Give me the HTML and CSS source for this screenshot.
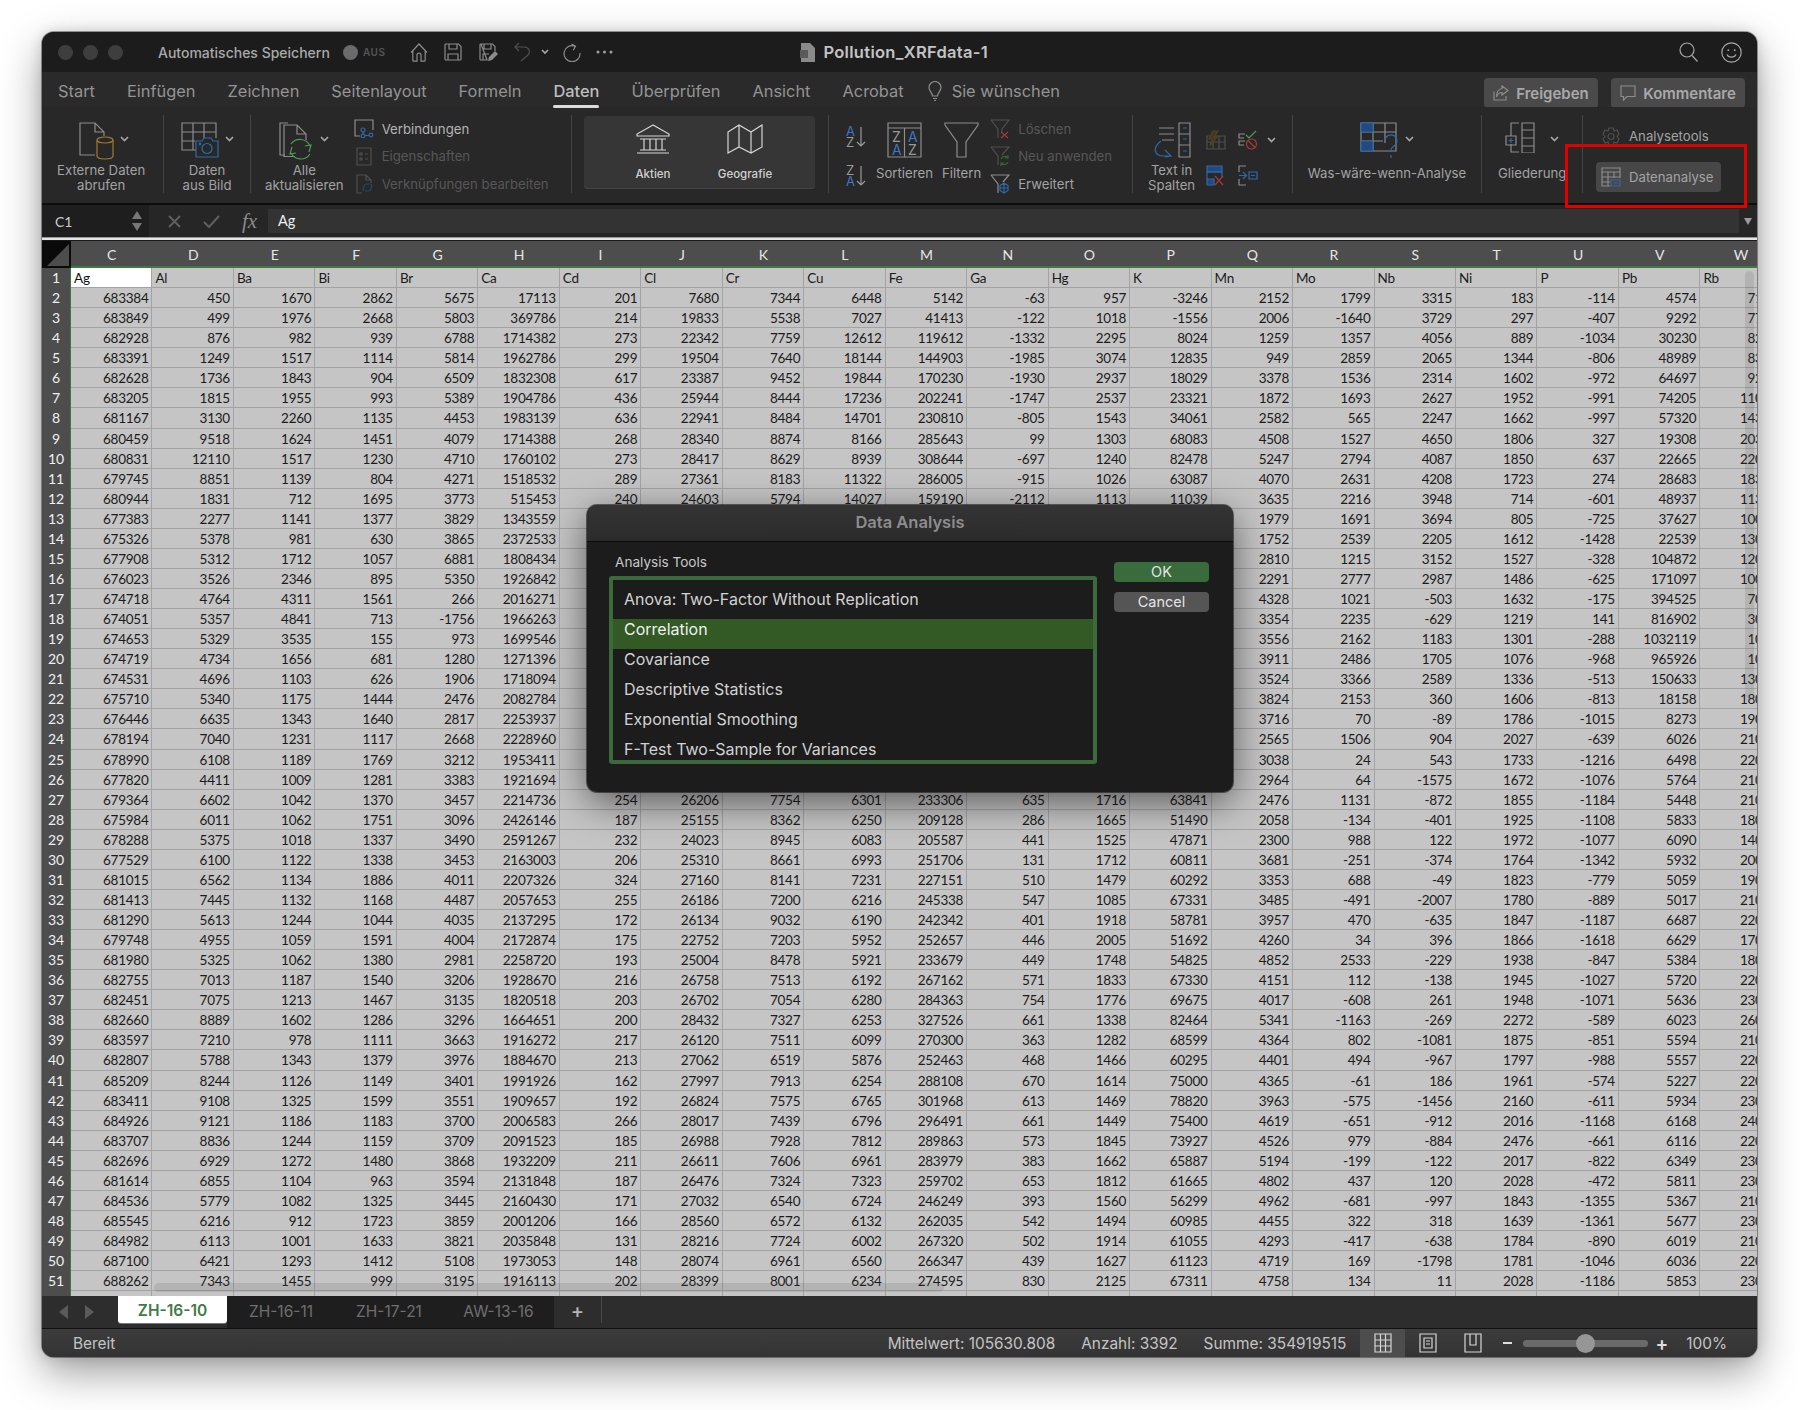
FILE: index.html
```html
<!DOCTYPE html>
<html>
	<head>
		<meta charset="utf-8">
		<title>Pollution_XRFdata-1</title>
		<link rel="stylesheet" href="styles.css">
	</head>
	<body>
		<div class="window">

			<!-- title bar -->
			<div class="titlebar">
				<div class="lights"><i></i><i></i><i></i></div>
				<span class="autosave">Automatisches Speichern</span>
				<i class="toggle"></i><span class="toggle-label">AUS</span>
				<svg class="ic qa-home" width="18" height="19" viewBox="0 0 18 19"><path d="M1 9.5L9 1l8 8.5M2.8 8v9.2a1 1 0 0 0 1 1H7v-6a2 2 0 0 1 4 0v6h3.2a1 1 0 0 0 1-1V8"/></svg>
				<svg class="ic qa-save" width="18" height="18" viewBox="0 0 18 18"><path d="M2 1h12.5L17 3.5V16a1 1 0 0 1-1 1H2a1 1 0 0 1-1-1V2a1 1 0 0 1 1-1zM5 1v5h8V1M4 17v-6h10v6"/></svg>
				<svg class="ic qa-saveas" width="19" height="19" viewBox="0 0 19 19"><path d="M2 1h11.5L16 3.5V8M8 17H2a1 1 0 0 1-1-1V2a1 1 0 0 1 1-1zM5 1v5h7V1M4 17v-6h6"/><path class="solid" d="M9 18l1-4 6-6 3 3-6 6z"/></svg>
				<svg class="ic qa-undo dim" width="17" height="20" viewBox="0 0 17 20"><path d="M5 1L1 5l4 4M1 5h9c5 0 7 5 4 8l-7 6"/></svg>
				<svg class="chev qa-chev" width="8" height="6" viewBox="0 0 8 6"><path d="M1 1l3 3 3-3"/></svg>
				<svg class="ic qa-redo" width="20" height="19" viewBox="0 0 20 19"><path d="M13 3.200A8 8 0 1 0 18 10M9.500 1l4 2.200-2.200 4"/></svg>
				<svg class="qa-dots" width="17" height="4" viewBox="0 0 17 4"><circle cx="2" cy="2" r="1.500"/><circle cx="8.500" cy="2" r="1.500"/><circle cx="15" cy="2" r="1.500"/></svg>
				<div class="doc-title">
					<svg width="16" height="19" viewBox="0 0 16 19"><path class="doc-fill" d="M1 0h9l5 5v14H1z"/><rect class="doc-x" x="0" y="7" width="8" height="8"/></svg>
					<span>Pollution_XRFdata-1</span>
				</div>
				<svg class="ic tb-search" width="19" height="20" viewBox="0 0 19 20"><circle cx="8" cy="8" r="7"/><path d="M13 13.500l5.500 6"/></svg>
				<svg class="ic tb-smile" width="21" height="21" viewBox="0 0 21 21"><circle cx="10.500" cy="10.500" r="9.700"/><circle class="solid" cx="7.300" cy="8.200" r=".9"/><circle class="solid" cx="13.700" cy="8.200" r=".9"/><path d="M6 12.500c1.500 3.500 7.500 3.500 9 0"/></svg>
			</div>

			<!-- ribbon tabs -->
			<div class="tabs">
				<span>Start</span>
				<span>Einfügen</span>
				<span>Zeichnen</span>
				<span>Seitenlayout</span>
				<span>Formeln</span>
				<span class="tab-on">Daten</span>
				<span>Überprüfen</span>
				<span>Ansicht</span>
				<span>Acrobat</span>
				<span class="tell">
					<svg class="ic" width="14" height="20" viewBox="0 0 14 20"><path d="M4.500 15C4 11 1 10 1 6.500a6 6 0 0 1 12 0c0 3.500-3 4.500-3.500 8.500zM5 17.500h4M6 19.500h2"/></svg>
					Sie wünschen
				</span>
				<div class="tab-btns">
					<button class="btn-top w-share">
						<svg class="ic" width="16" height="16" viewBox="0 0 16 16"><path d="M1 6.500V15h12v-4M9 1l6 4.500L9 10V7.500C6 7.500 4.500 9 3.500 12 3.500 7.500 5.500 4 9 3.500z"/></svg>
						Freigeben
					</button>
					<button class="btn-top w-note">
						<svg class="ic" width="16" height="16" viewBox="0 0 16 16"><path d="M1 1h14v10.500H7L3.500 15v-3.500H1z"/></svg>
						Kommentare
					</button>
				</div>
			</div>

			<!-- ribbon -->
			<div class="ribbon">
				<div class="group g-extern">
					<div class="tool">
						<div class="tool-icon shift">
							<svg class="ic" width="35" height="38" viewBox="0 0 35 38"><path d="M16 33H1V1h15l9 9v4M16 1v9h9"/><g class="or"><ellipse cx="26" cy="18" rx="8" ry="3"/><path d="M18 18v16c0 2 4 3 8 3s8-1 8-3V18"/></g></svg>
							<svg class="chev" width="9" height="6" viewBox="0 0 9 6"><path d="M1 1l3.500 3.500L8 1"/></svg>
						</div>
						<div class="label">Externe Daten<br>abrufen</div>
					</div>
				</div>

				<div class="group g-bild">
					<div class="tool">
						<div class="tool-icon">
							<svg class="ic" width="38" height="36" viewBox="0 0 38 36"><path d="M15 28H1V1h34v15M1 10h34M1 19h13M12 1v27M23 1v15"/><g class="bl"><path d="M15 35V19h6l2-3h7l2 3h5v16z"/><circle cx="26" cy="26.500" r="5"/><circle class="bl-solid" cx="19" cy="22" r=".8"/></g></svg>
							<svg class="chev" width="9" height="6" viewBox="0 0 9 6"><path d="M1 1l3.500 3.500L8 1"/></svg>
						</div>
						<div class="label">Daten<br>aus Bild</div>
					</div>
				</div>

				<div class="group g-conn">
					<div class="tool">
						<div class="tool-icon">
							<svg class="ic" width="35" height="38" viewBox="0 0 35 38"><path d="M9 1H1v32h5M5 35V3h13l9 9v6M18 3v9h9M5 34.500h11"/><g class="gr"><path d="M31 24a11 11 0 0 0-19-2M30 30l2-7-6 1M12 31a11 11 0 0 0 19 1M13 25l-2 7 6-1"/></g></svg>
							<svg class="chev" width="9" height="6" viewBox="0 0 9 6"><path d="M1 1l3.500 3.500L8 1"/></svg>
						</div>
						<div class="label">Alle<br>aktualisieren</div>
					</div>
					<div class="rows">
						<div class="row on">
							<svg class="ic" width="20" height="19" viewBox="0 0 20 19"><path d="M6 17H1V1h18v10"/><g class="bl"><circle cx="9" cy="11" r="2"/><circle cx="9" cy="17" r="1.800"/><circle cx="17" cy="16" r="1.800"/><path d="M9 13v2M11 16.500h4"/></g></svg>
							Verbindungen
						</div>
						<div class="row off">
							<svg class="ic dim" width="20" height="19" viewBox="0 0 20 19"><path d="M3 1h14v17H3zM6 6h2v2H6zM6 11h2v2H6zM11 7h3M11 12h3"/></svg>
							Eigenschaften
						</div>
						<div class="row off">
							<svg class="ic dim" width="20" height="20" viewBox="0 0 20 20"><path d="M8 19H3V1h9l5 5v3M12 1v5h5"/><g class="bl-dim"><path d="M10 13a3 3 0 0 1 3-3h3M17 14a3 3 0 0 1-3 3h-3M10 17a3 3 0 0 1 0-4M17 10a3 3 0 0 1 0 4"/></g></svg>
							Verknüpfungen bearbeiten
						</div>
					</div>
				</div>

				<div class="group g-types">
					<div class="panel">
						<div class="panel-tool">
							<div class="panel-icon">
								<svg class="ic-w" width="34" height="30" viewBox="0 0 34 30"><path d="M17 1L1 10v2h32v-2zM4 15h26M8 15v11M14 15v11M20 15v11M26 15v11M4 26h26M1 29h32"/></svg>
							</div>
							Aktien
						</div>
						<div class="panel-tool">
							<div class="panel-icon">
								<svg class="ic-w" width="36" height="30" viewBox="0 0 36 30"><path d="M1 8l11-7 12 7 11-7v22l-11 6-12-6-11 6zM12 1v22M24 8v21"/></svg>
							</div>
							Geografie
						</div>
					</div>
				</div>

				<div class="group g-sort">
					<div class="sort-btns">
						<svg width="21" height="22" viewBox="0 0 21 22"><text class="t-bl" x="0" y="10">A</text><text class="t-gy" x="0" y="21">Z</text><path class="arrow" d="M15 1v19M11 16l4 4 4-4"/></svg>
						<svg width="21" height="22" viewBox="0 0 21 22"><text class="t-gy" x="0" y="10">Z</text><text class="t-bl" x="0" y="21">A</text><path class="arrow" d="M15 1v19M11 16l4 4 4-4"/></svg>
					</div>
					<div class="tool">
						<div class="tool-icon">
							<svg class="ic" width="35" height="36" viewBox="0 0 35 36"><path d="M1 1h33v34H1zM1 6h33M17.500 6v29"/><text class="t-gy big" x="5" y="20">Z</text><text class="t-bl big" x="21" y="20">A</text><text class="t-bl big" x="5" y="33">A</text><text class="t-gy big" x="21" y="33">Z</text></svg>
						</div>
						<div class="label">Sortieren</div>
					</div>
					<div class="tool">
						<div class="tool-icon">
							<svg class="ic" width="35" height="36" viewBox="0 0 35 36"><path d="M1 1h33v2L22 20v15h-9V20L1 3z"/></svg>
						</div>
						<div class="label">Filtern</div>
					</div>
					<div class="rows">
						<div class="row off">
							<svg class="ic dim" width="20" height="20" viewBox="0 0 20 20"><path d="M1 1h18L12 10v3M8 19v-9L1 1"/><path class="rd" d="M11 13l7 6M18 13l-7 6"/></svg>
							Löschen
						</div>
						<div class="row off">
							<svg class="ic dim" width="20" height="20" viewBox="0 0 20 20"><path d="M1 1h18L12 9M8 19V10L1 1"/><path class="gr-dim" d="M11 13a4 4 0 0 1 7-1M18 9v3h-3M18 16a4 4 0 0 1-7 1M11 20v-3h3"/></svg>
							Neu anwenden
						</div>
						<div class="row on-soft">
							<svg class="ic" width="20" height="20" viewBox="0 0 20 20"><path d="M1 1h18L13 8M8 19V10L1 1"/><path class="bl" d="M14 9l4 2.500v5L14 19l-4-2.500v-5zM10 14h8M14 9v10"/></svg>
							Erweitert
						</div>
					</div>
				</div>

				<div class="group g-tools">
					<div class="tool">
						<div class="tool-icon">
							<svg class="ic" width="38" height="36" viewBox="0 0 38 36"><path d="M6 6h15M6 12h15M9 18h12"/><path class="bl" d="M8 19c-9 7-7 15 3 15h6M12 28l6 6-6 1"/><path d="M26 1h11v34H26zM26 12h11M26 23h11"/><path class="bl" d="M30 6h4M30 17h4M30 29h4"/></svg>
						</div>
						<div class="label">Text in<br>Spalten</div>
					</div>
					<div class="tool-grid">
						<svg class="ic dim" width="20" height="20" viewBox="0 0 20 20"><path d="M1 6h18v13H1zM1 12h18M7 6v13M13 6v13"/><path class="amber" d="M7 1h5L8 7h3l-7 9 2-7H3z"/></svg>
						<div class="with-chev">
							<svg class="ic" width="20" height="20" viewBox="0 0 20 20"><path d="M7 4H1v4h5M7 11H1v4h5"/><path class="gr" d="M8 5l3 3 7-7"/><g class="rd"><circle cx="13.500" cy="14" r="5"/><path d="M10 10.500l7 7"/></g></svg>
							<svg class="chev" width="9" height="6" viewBox="0 0 9 6"><path d="M1 1l3.500 3.500L8 1"/></svg>
						</div>
						<svg class="ic" width="19" height="21" viewBox="0 0 19 21"><path class="bl-solid" d="M1 1h15v6H1zM1 14h7v6H1z"/><path class="bl" d="M1 7h15v5M1 7v7"/><path class="rd" d="M9 11l8 9M17 11l-8 9"/></svg>
						<svg class="ic" width="20" height="21" viewBox="0 0 20 21"><path d="M1 7V1h7M1 14v6h7"/><path class="bl" d="M1 10.500h7M5 7l3.500 3.500L5 14M11 7h8v7h-8zM13 10.500h4"/></svg>
					</div>
				</div>

				<div class="group g-whatif">
					<div class="tool">
						<div class="tool-icon">
							<svg class="ic" width="39" height="36" viewBox="0 0 39 36"><path d="M1 1h35v28H1zM13 1v28M25 1v20M1 10h35M1 19h22"/><path class="bl-solid" d="M1 1h12v9H1zM1 19h12v10H1z"/><path class="bl" d="M25 18a6 6 0 1 1 9 6c-3 2-3 3-3 6M31 33v3"/></svg>
							<svg class="chev" width="9" height="6" viewBox="0 0 9 6"><path d="M1 1l3.500 3.500L8 1"/></svg>
						</div>
						<div class="label">Was-wäre-wenn-Analyse</div>
					</div>
				</div>

				<div class="group g-outline">
					<div class="tool">
						<div class="tool-icon">
							<svg class="ic" width="30" height="31" viewBox="0 0 30 31"><path d="M17 1h12v30H17zM17 8h12M17 16h12M17 24h12M14 1H6v13M6 22v8h8"/><path d="M1 14h10v9H1z"/><path class="bl" d="M3.500 18.500h5M6 16v5"/></svg>
							<svg class="chev wide" width="9" height="6" viewBox="0 0 9 6"><path d="M1 1l3.500 3.500L8 1"/></svg>
						</div>
						<div class="label">Gliederung</div>
					</div>
				</div>

				<div class="group-last">
					<div class="row-a off-soft">
						<svg class="ic dim" width="18" height="19" viewBox="0 0 18 19"><circle cx="9" cy="9.500" r="3"/><path d="M7 1h4l1 3 3-1 2 4-2 2.500 2 2.500-2 4-3-1-1 3H7l-1-3-3 1-2-4 2-2.500L1 7l2-4 3 1z"/></svg>
						Analysetools
					</div>
					<button class="btn-data">
						<svg class="ic" width="20" height="20" viewBox="0 0 20 20"><path d="M9 19H1V1h18v10M1 5h18M1 10h18M1 15h8M7 5v14M13 5v6"/><path class="bl" d="M10 13h9v6h-9zM13 16h4"/></svg>
						Datenanalyse
					</button>
				</div>
			</div>

			<!-- formula bar -->
			<div class="formula">
				<div class="namebox">
					<span>C1</span>
					<div class="spin"><i class="up"></i><i class="down"></i></div>
				</div>
				<div class="fx-btns">
					<svg class="fx-x" width="13" height="13" viewBox="0 0 13 13"><path d="M1 1l11 11M12 1L1 12"/></svg>
					<svg class="fx-x" width="17" height="13" viewBox="0 0 17 13"><path d="M1 7l5 5L16 1"/></svg>
					<span class="fx">fx</span>
				</div>
				<div class="fx-input">Ag</div>
				<i class="fx-drop"></i>
			</div>

			<div class="bright-line"></div>

			<!-- column letters -->
			<div class="colhead">
				<div class="corner"></div>
				<span>C</span><span>D</span><span>E</span><span>F</span><span>G</span><span>H</span><span>I</span>
				<span>J</span><span>K</span><span>L</span><span>M</span><span>N</span><span>O</span><span>P</span>
				<span>Q</span><span>R</span><span>S</span><span>T</span><span>U</span><span>V</span><span>W</span>
			</div>

			<!-- cells come from sheet.js -->
			<div class="sheet-wrap">
				<div class="sheet" id="sheet"></div>
				<div class="scroll-v"></div>
				<div class="scroll-h"></div>
			</div>

			<!-- sheet tabs -->
			<div class="sheetbar">
				<div class="sheet-nav"><i class="nav-l"></i><i class="nav-r"></i></div>
				<span class="stab stab-on">ZH-16-10</span>
				<span class="stab w108">ZH-16-11</span>
				<span class="stab w108">ZH-17-21</span>
				<span class="stab w111">AW-13-16</span>
				<span class="stab-add">+</span>
			</div>

			<!-- status bar -->
			<div class="status">
				<span class="ready">Bereit</span>
				<div class="stats">
					<span>Mittelwert: 105630.808</span>
					<span>Anzahl: 3392</span>
					<span>Summe: 354919515</span>
				</div>
				<div class="views">
					<span class="view view-on"><svg class="ic-w" width="18" height="20" viewBox="0 0 18 20"><path d="M1 1h16v18H1zM1 7h16M1 13h16M6.500 1v18M11.500 1v18"/></svg></span>
					<span class="view"><svg class="ic-w" width="18" height="20" viewBox="0 0 18 20"><path d="M1 1h16v18H1zM5 5h8v10H5zM7 8h4M7 11h4"/></svg></span>
					<span class="view"><svg class="ic-w" width="18" height="20" viewBox="0 0 18 20"><path d="M1 1h16v18H1zM6 1v11h6V1"/></svg></span>
				</div>
				<i class="zoom-minus"></i>
				<div class="slider"><i></i></div>
				<span class="zoom-plus">+</span>
				<span class="zoom-val">100%</span>
			</div>

			<!-- red annotation around Datenanalyse -->
			<div class="marker"></div>

			<!-- Data Analysis dialog -->
			<div class="dialog">
				<div class="dialog-head">Data Analysis</div>
				<div class="dialog-body">
					<div class="dialog-left">
						<div class="dialog-caption">Analysis Tools</div>
						<ul class="tool-list">
							<li>Anova: Two-Factor Without Replication</li>
							<li class="sel">Correlation</li>
							<li>Covariance</li>
							<li>Descriptive Statistics</li>
							<li>Exponential Smoothing</li>
							<li>F-Test Two-Sample for Variances</li>
						</ul>
					</div>
					<div class="dialog-btns">
						<button class="dlg-btn dlg-ok">OK</button>
						<button class="dlg-btn">Cancel</button>
					</div>
				</div>
			</div>
		</div>
		<script src="sheet.js"></script>
	</body>
</html>
```

FILE: styles.css
```css
* {
	box-sizing: border-box;
}

html, body {
	margin: 0;
	background: #fff;
	overflow: hidden;
}

body {
	font-family: Inter, "Liberation Sans", sans-serif;
	height: 1410px;
}

i {
	display: block;
}

button {
	font-family: inherit;
	border: 0;
	cursor: default;
}

.window {
	position: relative;
	width: 1715px;
	height: 1325px;
	margin: 32px 0 0 42px;
	border-radius: 12px;
	overflow: hidden;
	display: flex;
	flex-direction: column;
	background: #282828;
	box-shadow: 0 16px 42px rgba(0, 0, 0, .38), 0 0 14px rgba(0, 0, 0, .14), 0 0 0 1px rgba(0, 0, 0, .35);
}

/* icon strokes */
svg {
	flex: none;
	display: block;
}

.ic {
	fill: none;
	stroke: #8c8c8c;
	stroke-width: 1.2;
}

.ic.dim {
	stroke: #4f4f4f;
}

.ic-w {
	fill: none;
	stroke: #d6d6d6;
	stroke-width: 1.2;
}

.solid {
	fill: #8c8c8c;
	stroke: none;
}

.chev {
	fill: none;
	stroke: #a8a8a8;
	stroke-width: 1.6;
}

.or {
	stroke: #a5762f;
}

.bl {
	stroke: #2f69a8;
}

.bl-solid {
	fill: #23497f;
	stroke: #2f69a8;
}

.bl-dim {
	stroke: #28456b;
}

.gr {
	stroke: #4f9a50;
}

.gr-dim {
	stroke: #36643a;
}

.rd {
	stroke: #a23a3a;
}

.amber {
	fill: #43381c;
	stroke: #4f4322;
}

.t-bl, .t-gy {
	font-size: 13px;
	stroke: none;
}

.t-bl {
	fill: #3a78c2;
}

.t-gy {
	fill: #9a9a9a;
}

.big {
	font-size: 14px;
}

.arrow {
	fill: none;
	stroke: #9a9a9a;
	stroke-width: 1.2;
}

/* title bar */
.titlebar {
	flex: none;
	height: 40px;
	background: #1c1c1c;
	display: flex;
	align-items: center;
	padding-left: 16px;
	color: #a9a9a9;
	position: relative;
}

.lights {
	display: flex;
	gap: 10px;
	margin-right: 35px;
}

.lights i {
	width: 15px;
	height: 15px;
	border-radius: 50%;
	background: #3e3e3e;
}

.autosave {
	font-size: 14px;
	font-weight: 500;
	width: 185px;
	white-space: nowrap;
}

.toggle {
	width: 15px;
	height: 15px;
	border-radius: 50%;
	background: #6b6b6b;
}

.toggle-label {
	font-size: 10px;
	font-weight: 600;
	letter-spacing: .5px;
	color: #555;
	margin: 0 25px 0 5px;
}

.qa-save {
	margin-left: 16px;
}

.qa-saveas {
	margin-left: 17px;
}

.qa-undo {
	margin-left: 16px;
}

.qa-chev {
	margin-left: 10px;
}

.qa-redo {
	margin-left: 13px;
}

.qa-dots {
	fill: #a0a0a0;
	margin-left: 14px;
}

.doc-title {
	margin-left: 187px;
	display: flex;
	align-items: center;
	gap: 7px;
	font-size: 16.5px;
	font-weight: 600;
	letter-spacing: .3px;
	color: #c4c4c4;
}

.doc-fill {
	fill: #8a8a8a;
}

.doc-x {
	fill: #5a5a5a;
}

.tb-search {
	margin-left: auto;
	stroke: #a8a8a8;
}

.tb-smile {
	margin: 0 15px 0 23px;
	stroke: #a8a8a8;
}

.tb-smile .solid {
	fill: #a8a8a8;
}

/* ribbon tabs */
.tabs {
	flex: none;
	height: 35px;
	background: #2a2a2a;
	display: flex;
	align-items: center;
	gap: 32px;
	padding: 2px 0 0 16px;
	font-size: 16.4px;
	color: #949494;
}

.tab-on {
	position: relative;
	color: #bdbdbd;
	font-weight: 500;
}

.tab-on:after {
	content: "";
	position: absolute;
	left: 0;
	right: 0;
	bottom: -7px;
	height: 3px;
	border-radius: 2px;
	background: #dcdcdc;
}

.tell {
	display: flex;
	align-items: center;
	gap: 10px;
	margin-left: -8px;
}

.tab-btns {
	margin-left: auto;
	display: flex;
	gap: 13px;
	padding: 5px 12px 0 0;
}

.btn-top {
	height: 30px;
	padding: 0;
	display: flex;
	align-items: center;
	justify-content: center;
	gap: 7px;
	border-radius: 4px;
	background: #4a4a4a;
	color: #a9a9a9;
	font-size: 15px;
	font-weight: 600;
}

.w-share {
	width: 114px;
}

.w-note {
	width: 134px;
}

/* ribbon */
.ribbon {
	flex: none;
	height: 98px;
	border-bottom: 2px solid #0c0c0c;
	background: #282828;
	display: flex;
	padding-top: 8px;
}

.group {
	height: 78px;
	border-right: 1px solid #444;
	display: flex;
	flex: none;
}

.g-extern {
	width: 122px;
	padding-left: 15px;
}

.g-bild {
	width: 87px;
	justify-content: center;
}

.g-conn {
	width: 321px;
	padding-left: 14px;
	gap: 10px;
}

.g-types {
	width: 257px;
	padding: 1px 0 0 12px;
}

.g-sort {
	width: 304px;
	padding-left: 17px;
	gap: 9px;
}

.g-tools {
	width: 160px;
	padding-left: 15px;
	gap: 11px;
}

.g-whatif {
	width: 189px;
	justify-content: center;
}

.g-outline {
	width: 101px;
	padding-left: 16px;
}

.group-last {
	padding-left: 13px;
	display: flex;
	flex-direction: column;
}

.tool {
	display: flex;
	flex-direction: column;
	align-items: center;
	padding-top: 7px;
}

.tool-icon {
	height: 44px;
	display: flex;
	align-items: flex-start;
	gap: 6px;
}

.tool-icon .chev {
	margin-top: 14px;
}

.tool-icon .chev.wide {
	margin-left: 9px;
}

.shift {
	margin-left: 5px;
}

.label {
	font-size: 13.2px;
	line-height: 15px;
	color: #a3a3a3;
	text-align: center;
	white-space: nowrap;
}

.rows {
	display: flex;
	flex-direction: column;
}

.row {
	flex: none;
	height: 27.5px;
	display: flex;
	align-items: center;
	gap: 8px;
	font-size: 13.2px;
	white-space: nowrap;
}

.on {
	color: #b5b5b5;
}

.on-soft {
	color: #a3a3a3;
}

.off {
	color: #575757;
}

/* Aktien / Geografie */
.panel {
	width: 231px;
	height: 73px;
	border-radius: 4px;
	background: #363636;
	box-shadow: inset 0 -1px 0 #444;
	display: flex;
	padding-left: 23px;
}

.panel-tool {
	width: 92px;
	font-size: 11.5px;
	font-weight: 500;
	color: #d0d0d0;
	display: flex;
	flex-direction: column;
	align-items: center;
	padding-top: 8px;
}

.panel-icon {
	height: 43px;
}

.sort-btns {
	display: flex;
	flex-direction: column;
	gap: 17px;
	padding-top: 11px;
}

/* small tool icons next to Text in Spalten */
.tool-grid {
	display: grid;
	grid-template-columns: 20px 38px;
	grid-template-rows: 20px 21px;
	column-gap: 12px;
	row-gap: 15px;
	padding-top: 15px;
}

.with-chev {
	display: flex;
	gap: 9px;
	align-items: center;
}

.row-a {
	height: 20px;
	margin: 11px 0 0 6px;
	display: flex;
	align-items: center;
	gap: 9px;
	font-size: 13.2px;
	color: #a3a3a3;
}

.btn-data {
	width: 125px;
	height: 30px;
	margin-top: 16px;
	padding: 0 0 0 5px;
	border-radius: 4px;
	background: #474747;
	display: flex;
	align-items: center;
	gap: 8px;
	font-size: 13.2px;
	color: #a3a3a3;
}

/* formula bar */
.formula {
	flex: none;
	height: 32px;
	background: #262626;
	display: flex;
	align-items: center;
	color: #ddd;
}

.namebox {
	width: 107px;
	height: 32px;
	padding: 0 0 0 13px;
	display: flex;
	align-items: center;
	justify-content: space-between;
	background: #1e1e1e;
	font-family: Lato, "Liberation Sans", sans-serif;
	font-size: 14px;
	color: #ccc;
}

.spin {
	width: 11px;
	margin-right: 6px;
	display: flex;
	flex-direction: column;
	gap: 4px;
}

.up, .down {
	width: 0;
	height: 0;
	border-left: 5px solid transparent;
	border-right: 5px solid transparent;
}

.up {
	border-bottom: 8px solid #777;
}

.down {
	border-top: 8px solid #777;
}

.fx-btns {
	width: 119px;
	height: 32px;
	display: flex;
	align-items: center;
	padding-left: 19px;
	gap: 22px;
}

.fx-x {
	fill: none;
	stroke: #5f5f5f;
	stroke-width: 2;
}

.fx {
	font-family: "Liberation Serif", serif;
	font-style: italic;
	font-size: 21px;
	color: #8a8a8a;
}

.fx-input {
	width: 1471px;
	height: 24px;
	background: #333;
	padding-left: 10px;
	line-height: 24px;
	font-family: Lato, "Liberation Sans", sans-serif;
	font-size: 14.5px;
	color: #eee;
}

.fx-drop {
	width: 0;
	height: 0;
	margin-left: 5px;
	border-left: 4px solid transparent;
	border-right: 4px solid transparent;
	border-top: 7px solid #9a9a9a;
}

.bright-line {
	flex: none;
	height: 4px;
	border-top: 1px solid #999;
	border-bottom: 1px solid #1a1a1a;
	background: #e6e6e6;
}

/* column letters */
.colhead {
	flex: none;
	height: 27px;
	background: #4d4d4d;
	border-bottom: 2px solid #3d7a42;
	display: grid;
	grid-template-columns: 29px repeat(21, 81.48px);
	font-family: Lato, "Liberation Sans", sans-serif;
	font-size: 14px;
	color: #e6e6e6;
	line-height: 27px;
	text-align: center;
}

.corner {
	background: #0a0a0a;
	position: relative;
}

.corner:after {
	content: "";
	position: absolute;
	inset: 3px 2px 2px 5px;
	background: #4d4d4d;
	clip-path: polygon(100% 0, 100% 100%, 0 100%);
}

/* cells */
.sheet-wrap {
	flex: 1;
	min-height: 0;
	position: relative;
	overflow: hidden;
	background: #c5c5c5;
}

.sheet {
	display: grid;
	grid-template-columns: 29px repeat(21, 81.48px);
	grid-auto-rows: 20.07px;
	font-family: Lato, "Liberation Sans", sans-serif;
	font-size: 13.5px;
	letter-spacing: -.25px;
	color: #1b1b1b;
}

.rh {
	background: #4d4d4d;
	border-right: 1px solid #3d7a42;
	color: #f0f0f0;
	text-align: center;
	line-height: 20px;
	font-size: 14px;
	letter-spacing: 0;
}

.c {
	background: #c5c5c5;
	border-right: 1px solid #a3a3a3;
	border-bottom: 1px solid #a3a3a3;
	padding-right: 3px;
	text-align: right;
	line-height: 20px;
	white-space: nowrap;
}

.c.txt {
	text-align: left;
	padding: 0 0 0 3px;
}

.c.active {
	background: #fff;
	color: #111;
}

.scroll-v {
	position: absolute;
	left: 1703px;
	top: 3px;
	width: 9px;
	height: 430px;
	border-radius: 5px;
	background: rgba(90, 90, 90, .16);
}

.scroll-h {
	position: absolute;
	left: 112px;
	top: 1015px;
	width: 790px;
	height: 9px;
	border-radius: 5px;
	background: rgba(90, 90, 90, .16);
}

/* sheet tabs */
.sheetbar {
	flex: none;
	height: 33px;
	background: #2d2d2d;
	border-bottom: 1px solid #111;
	display: flex;
}

.sheet-nav {
	width: 76px;
	display: flex;
	gap: 17px;
	padding: 9px 0 0 17px;
}

.nav-l, .nav-r {
	width: 0;
	height: 0;
	border-top: 7px solid transparent;
	border-bottom: 7px solid transparent;
}

.nav-l {
	border-right: 9px solid #5a5a5a;
}

.nav-r {
	border-left: 9px solid #5a5a5a;
}

.stab {
	background: #1e1e1e;
	color: #6f6f6f;
	font-size: 15.5px;
	line-height: 31px;
	text-align: center;
	box-shadow: inset -1px -5px 0 #1e1e1e, inset -1px 0 0 #4a4a4a;
}

.stab-on {
	width: 109px;
	height: 27px;
	background: #fff;
	color: #3e7b45;
	font-weight: 600;
	border-radius: 0 0 3px 3px;
	line-height: 30px;
	box-shadow: 0 1px 0 #777;
}

.w108 {
	width: 108px;
}

.w111 {
	width: 111px;
}

.stab-add {
	width: 48px;
	height: 27px;
	text-align: center;
	font-size: 20px;
	font-weight: 500;
	line-height: 30px;
	color: #b5b5b5;
	border-right: 1px solid #4a4a4a;
}

/* status bar */
.status {
	flex: none;
	height: 28px;
	background: linear-gradient(#3c3c3c, #333);
	display: flex;
	align-items: center;
	font-size: 15.4px;
	color: #c4c4c4;
	padding-left: 31px;
}

.stats {
	margin-left: auto;
	display: flex;
	gap: 26px;
}

.views {
	display: flex;
	margin-left: 14px;
}

.view {
	width: 45px;
	height: 28px;
	display: flex;
	align-items: center;
	justify-content: center;
}

.view-on {
	background: #4d4d4d;
}

.zoom-minus {
	width: 9px;
	height: 2.5px;
	background: #ddd;
	margin-left: 8px;
}

.slider {
	width: 125px;
	height: 7px;
	margin-left: 11px;
	border-radius: 4px;
	background: #6a6a6a;
	position: relative;
}

.slider i {
	position: absolute;
	left: 53px;
	top: -6px;
	width: 19px;
	height: 19px;
	border-radius: 50%;
	background: #969696;
}

.zoom-plus {
	margin-left: 7px;
	font-size: 19px;
	font-weight: 600;
	color: #ddd;
}

.zoom-val {
	margin: 0 30px 0 18px;
}

/* red annotation */
.marker {
	position: absolute;
	left: 1523px;
	top: 112px;
	width: 182px;
	height: 64px;
	border: 3px solid #e30000;
	border-radius: 1px;
}

/* dialog */
.dialog {
	position: absolute;
	left: 545px;
	top: 473px;
	width: 646px;
	height: 287px;
	border-radius: 10px;
	overflow: hidden;
	background: #1c1c1c;
	box-shadow: 0 10px 38px rgba(0, 0, 0, .55), 0 0 0 1px rgba(0, 0, 0, .5);
	display: flex;
	flex-direction: column;
}

.dialog-head {
	flex: none;
	height: 37px;
	background: linear-gradient(#343434, #2b2b2b);
	border-bottom: 1px solid #0c0c0c;
	text-align: center;
	line-height: 35px;
	font-size: 16.5px;
	font-weight: 600;
	color: #8d8d8d;
}

.dialog-body {
	display: flex;
	padding-left: 22px;
}

.dialog-left {
	width: 488px;
}

.dialog-caption {
	font-size: 13.6px;
	line-height: 16px;
	color: #c8c8c8;
	padding: 12px 0 6px 6px;
	height: 34px;
}

.tool-list {
	list-style: none;
	margin: 0;
	padding: 9px 0 0;
	height: 188px;
	overflow: hidden;
	border: 4px solid #3d6a3d;
	border-radius: 3px;
	background: #1c1c1c;
	font-size: 16px;
	color: #d2d2d2;
}

.tool-list li {
	height: 30px;
	line-height: 20px;
	padding-left: 11px;
}

.tool-list .sel {
	background: #335a25;
	color: #f0f0f0;
}

.dialog-btns {
	width: 95px;
	margin-left: 17px;
	padding-top: 20px;
	display: flex;
	flex-direction: column;
	gap: 10px;
}

.dlg-btn {
	height: 20px;
	padding: 0;
	border-radius: 4px;
	background: #555;
	font-size: 14.5px;
	line-height: 18px;
	color: #e4e4e4;
}

.dlg-ok {
	background: #3a6b3c;
}
```

FILE: sheet.js
```js
// element columns C..W, "." = hidden behind the dialog anyway
var heads = "Ag Al Ba Bi Br Ca Cd Cl Cr Cu Fe Ga Hg K Mn Mo Nb Ni P Pb Rb".split(" ");
var data = [
	"683384 450 1670 2862 5675 17113 201 7680 7344 6448 5142 -63 957 -3246 2152 1799 3315 183 -114 4574 7150",
	"683849 499 1976 2668 5803 369786 214 19833 5538 7027 41413 -122 1018 -1556 2006 -1640 3729 297 -407 9292 7700",
	"682928 876 982 939 6788 1714382 273 22342 7759 12612 119612 -1332 2295 8024 1259 1357 4056 889 -1034 30230 8200",
	"683391 1249 1517 1114 5814 1962786 299 19504 7640 18144 144903 -1985 3074 12835 949 2859 2065 1344 -806 48989 8300",
	"682628 1736 1843 904 6509 1832308 617 23387 9452 19844 170230 -1930 2937 18029 3378 1536 2314 1602 -972 64697 9200",
	"683205 1815 1955 993 5389 1904786 436 25944 8444 17236 202241 -1747 2537 23321 1872 1693 2627 1952 -991 74205 11000",
	"681167 3130 2260 1135 4453 1983139 636 22941 8484 14701 230810 -805 1543 34061 2582 565 2247 1662 -997 57320 14300",
	"680459 9518 1624 1451 4079 1714388 268 28340 8874 8166 285643 99 1303 68083 4508 1527 4650 1806 327 19308 20300",
	"680831 12110 1517 1230 4710 1760102 273 28417 8629 8939 308644 -697 1240 82478 5247 2794 4087 1850 637 22665 22000",
	"679745 8851 1139 804 4271 1518532 289 27361 8183 11322 286005 -915 1026 63087 4070 2631 4208 1723 274 28683 18300",
	"680944 1831 712 1695 3773 515453 240 24603 5794 14027 159190 -2112 1113 11039 3635 2216 3948 714 -601 48937 11300",
	"677383 2277 1141 1377 3829 1343559 . . . . . . . . 1979 1691 3694 805 -725 37627 10000",
	"675326 5378 981 630 3865 2372533 . . . . . . . . 1752 2539 2205 1612 -1428 22539 13000",
	"677908 5312 1712 1057 6881 1808434 . . . . . . . . 2810 1215 3152 1527 -328 104872 12000",
	"676023 3526 2346 895 5350 1926842 . . . . . . . . 2291 2777 2987 1486 -625 171097 10000",
	"674718 4764 4311 1561 266 2016271 . . . . . . . . 4328 1021 -503 1632 -175 394525 7000",
	"674051 5357 4841 713 -1756 1966263 . . . . . . . . 3354 2235 -629 1219 141 816902 3000",
	"674653 5329 3535 155 973 1699546 . . . . . . . . 3556 2162 1183 1301 -288 1032119 1000",
	"674719 4734 1656 681 1280 1271396 . . . . . . . . 3911 2486 1705 1076 -968 965926 1000",
	"674531 4696 1103 626 1906 1718094 . . . . . . . . 3524 3366 2589 1336 -513 150633 13000",
	"675710 5340 1175 1444 2476 2082784 . . . . . . . . 3824 2153 360 1606 -813 18158 18000",
	"676446 6635 1343 1640 2817 2253937 . . . . . . . . 3716 70 -89 1786 -1015 8273 19000",
	"678194 7040 1231 1117 2668 2228960 . . . . . . . . 2565 1506 904 2027 -639 6026 21000",
	"678990 6108 1189 1769 3212 1953411 . . . . . . . . 3038 24 543 1733 -1216 6498 22000",
	"677820 4411 1009 1281 3383 1921694 . . . . . . . . 2964 64 -1575 1672 -1076 5764 21000",
	"679364 6602 1042 1370 3457 2214736 254 26206 7754 6301 233306 635 1716 63841 2476 1131 -872 1855 -1184 5448 21000",
	"675984 6011 1062 1751 3096 2426146 187 25155 8362 6250 209128 286 1665 51490 2058 -134 -401 1925 -1108 5833 18000",
	"678288 5375 1018 1337 3490 2591267 232 24023 8945 6083 205587 441 1525 47871 2300 988 122 1972 -1077 6090 14000",
	"677529 6100 1122 1338 3453 2163003 206 25310 8661 6993 251706 131 1712 60811 3681 -251 -374 1764 -1342 5932 20000",
	"681015 6562 1134 1886 4011 2207326 324 27160 8141 7231 227151 510 1479 60292 3353 688 -49 1823 -779 5059 19000",
	"681413 7445 1132 1168 4487 2057653 255 26186 7200 6216 245338 547 1085 67331 3485 -491 -2007 1780 -889 5017 21000",
	"681290 5613 1244 1044 4035 2137295 172 26134 9032 6190 242342 401 1918 58781 3957 470 -635 1847 -1187 6687 22000",
	"679748 4955 1059 1591 4004 2172874 175 22752 7203 5952 252657 446 2005 51692 4260 34 396 1866 -1618 6629 17000",
	"681980 5325 1062 1380 2981 2258720 193 25004 8478 5921 233679 449 1748 54825 4852 2533 -229 1938 -847 5384 18000",
	"682755 7013 1187 1540 3206 1928670 216 26758 7513 6192 267162 571 1833 67330 4151 112 -138 1945 -1027 5720 22000",
	"682451 7075 1213 1467 3135 1820518 203 26702 7054 6280 284363 754 1776 69675 4017 -608 261 1948 -1071 5636 23000",
	"682660 8889 1602 1286 3296 1664651 200 28432 7327 6253 327526 661 1338 82464 5341 -1163 -269 2272 -589 6023 26000",
	"683597 7210 978 1111 3663 1916272 217 26120 7511 6099 270300 363 1282 68599 4364 802 -1081 1875 -851 5594 21000",
	"682807 5788 1343 1379 3976 1884670 213 27062 6519 5876 252463 468 1466 60295 4401 494 -967 1797 -988 5557 22000",
	"685209 8244 1126 1149 3401 1991926 162 27997 7913 6254 288108 670 1614 75000 4365 -61 186 1961 -574 5227 22000",
	"683411 9108 1325 1599 3551 1909657 192 26824 7575 6765 301968 613 1469 78820 3963 -575 -1456 2160 -611 5934 23000",
	"684926 9121 1186 1183 3700 2006583 266 28017 7439 6796 296491 661 1449 75400 4619 -651 -912 2016 -1168 6168 24000",
	"683707 8836 1244 1159 3709 2091523 185 26988 7928 7812 289863 573 1845 73927 4526 979 -884 2476 -661 6116 22000",
	"682696 6929 1272 1480 3868 1932209 211 26611 7606 6961 283979 383 1662 65887 5194 -199 -122 2017 -822 6349 23000",
	"681614 6855 1104 963 3594 2131848 187 26476 7324 7323 259702 653 1812 61665 4802 437 120 2028 -472 5811 23000",
	"684536 5779 1082 1325 3445 2160430 171 27032 6540 6724 246249 393 1560 56299 4962 -681 -997 1843 -1355 5367 21000",
	"685545 6216 912 1723 3859 2001206 166 28560 6572 6132 262035 542 1494 60985 4455 322 318 1639 -1361 5677 23000",
	"684982 6113 1001 1633 3821 2035848 131 28216 7724 6002 267320 502 1914 61055 4293 -417 -638 1784 -890 6019 21000",
	"687100 6421 1293 1412 5108 1973053 148 28074 6961 6560 266347 439 1627 61123 4719 169 -1798 1781 -1046 6036 22000",
	"688262 7343 1455 999 3195 1916113 202 28399 8001 6234 274595 830 2125 67311 4758 134 11 2028 -1186 5853 23000"
];

function addCell(parent, cls, text) {
	var d = document.createElement("div");
	d.className = cls;
	d.textContent = text;
	parent.appendChild(d);
}

var sheet = document.getElementById("sheet");
var i, j, vals;

addCell(sheet, "rh", "1");
for (j = 0; j < heads.length; j++) {
	addCell(sheet, j == 0 ? "c txt active" : "c txt", heads[j]);
}
for (i = 0; i < data.length; i++) {
	vals = data[i].split(" ");
	addCell(sheet, "rh", String(i + 2));
	for (j = 0; j < vals.length; j++) {
		addCell(sheet, "c", vals[j] == "." ? "" : vals[j]);
	}
}
// row 52 is cut off by the tab bar
addCell(sheet, "rh", "");
for (j = 0; j < heads.length; j++) {
	addCell(sheet, "c", "");
}
```
